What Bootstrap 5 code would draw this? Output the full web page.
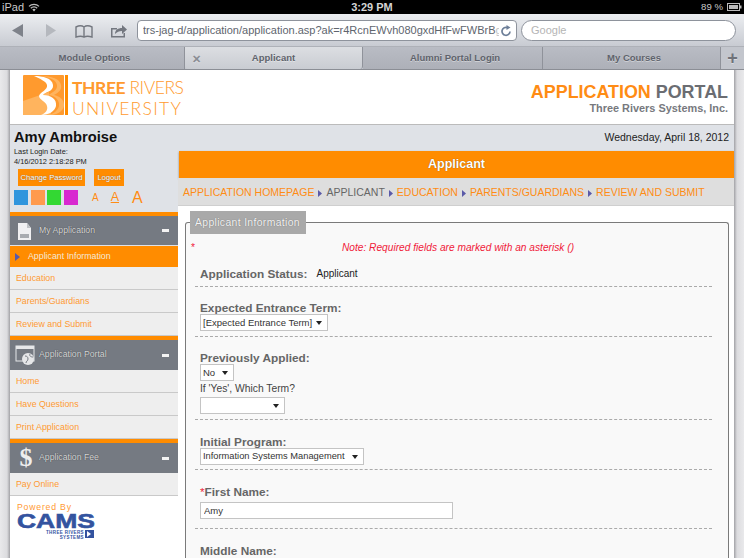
<!DOCTYPE html>
<html lang="en">
<head>
<meta charset="utf-8">
<title>Applicant</title>
<link href="https://cdn.jsdelivr.net/npm/bootstrap@5.3.0/dist/css/bootstrap.min.css" rel="stylesheet">
<style>
html,body{margin:0;height:558px;overflow:hidden;background:#e4e4e7;font-family:"Liberation Sans",Arial,sans-serif;}
.shell{width:744px;height:558px;overflow:hidden;}
.statusbar{height:14px;background:#000;color:#c9c9c9;font-size:11px;line-height:14px;padding:0 2px 0 2px;position:relative;}
.statusbar .clock{position:absolute;left:0;right:0;text-align:center;font-weight:700;color:#d4d4d4;}
.toolbar{height:32px;background:linear-gradient(#eceef1,#c8cbd2);border-top-left-radius:3px;border-top-right-radius:3px;padding:5px 0 0 12px;}
.urlbox{position:absolute;left:137px;top:20px;width:380px;height:21px;background:#fff;border:1px solid #8e939c;border-radius:4px;font-size:11px;line-height:19px;color:#60656e;padding-left:5px;white-space:nowrap;overflow:hidden;}
.urlclip{display:block;width:356px;overflow:hidden;}
.urlbox span.fade{color:#c0c2c6;opacity:1;}
.searchbox{position:absolute;left:521px;top:20px;width:215px;height:21px;background:#fff;border:1px solid #8e939c;border-radius:11px;font-size:11px;line-height:19px;color:#b5b5b5;padding-left:9px;}
.tabbar{height:24px;background:#c3c6cd;display:flex;border-top:1px solid #aeb1b8;border-bottom:1px solid #8b8e95;font-size:9.5px;font-weight:700;color:#5f636c;text-shadow:0 1px 0 rgba(255,255,255,.4);}
.tabitem{display:flex;align-items:center;justify-content:center;height:22px;background:linear-gradient(#b9bcc4,#adb0b8);border-right:1px solid #8f929a;}
.tabitem.pad{padding-left:5px;}
.tabitem.on{background:linear-gradient(#dcdee2,#c9ccd2);border-right:1px solid #8f929a;position:relative;border-bottom-left-radius:3px;border-bottom-right-radius:3px;}
.tab-x{position:absolute;left:7px;top:4px;font-size:11px;color:#8a8d94;font-weight:700;}
.tabplus{font-size:18px;color:#6f7279;line-height:1;}
.pagewrap{height:488px;display:flex;background:#ececee;overflow:hidden;}
.gutter{width:10px;flex:none;background:linear-gradient(90deg,#e9e9eb,#dcdcdf 70%,#a2a2a6);}
.pagebody{flex:1;background:#fff;min-width:0;}
.brandhead{height:55px;border-bottom:1px solid #bbb;background:#fff;display:flex;justify-content:space-between;padding:5px 6px 0 13px;}
.wordmark{color:#ff9a2e;font-family:Lato,"Liberation Sans",sans-serif;font-size:17.5px;line-height:21px;margin-left:4px;margin-top:2px;font-weight:300;white-space:nowrap;}
.wordmark b{font-weight:700;}
.wm-a{letter-spacing:-.45px;}
.wm-b{letter-spacing:1.3px;}
.porttitle{font-size:17.9px;font-weight:700;line-height:19px;text-align:right;color:#6b6d72;margin-top:8px;}
.porttitle em{font-style:normal;color:#ff8c14;}
.portsub{font-size:10.9px;font-weight:700;line-height:12px;color:#77797e;text-align:right;}
.twocol{display:flex;background:#dfe2e7;height:433px;}
.sidecol{width:168px;flex:none;display:flex;flex-direction:column;}
.maincol{flex:1;min-width:0;}
.userbox{height:87px;padding:3px 4px 0 4px;flex:none;}
.username{font-size:14.7px;font-weight:700;line-height:19px;color:#111;}
.logininfo{font-size:7.4px;line-height:9.5px;color:#222;}
.minibtn{background:#ff8c00;color:#fff;font-size:7.6px;border-radius:0;border:0;padding:0;height:17px;line-height:17px;text-shadow:0 0 1px #555;text-align:center;white-space:nowrap;}
.btnrow{margin:3px 0 0 4px;gap:9px;}
.swatchrow{margin-top:4px;align-items:center;}
.swatch{width:14px;height:15px;margin-right:2.5px;}
.fontsz{color:#ff8c14;margin:0;line-height:15px;}
.fs-a{font-size:10px;margin-left:12px;}
.fs-b{font-size:12.5px;margin-left:12px;text-decoration:underline;}
.fs-c{font-size:16px;margin-left:13px;}
.sidehead{height:34px;flex:none;border-top:4px solid #ff8c00;background:#757a82;color:#d6d7d9;font-size:8.7px;display:flex;align-items:center;padding:0 9px 0 5px;text-shadow:0 0 1px #333;}
.sidehead.first{height:33px;}
.sidehead .ttl{margin-left:2px;flex:1;}
.sidehead .ico{width:22px;height:24px;flex:none;}
.dollar{font-family:"Liberation Serif",serif;font-size:26px;font-weight:700;color:#eee;line-height:1;text-shadow:none;}
.minus{width:7px;height:3px;background:#f3f3f3;}
.sidelink{display:block;flex:none;height:23px;line-height:22px;background:#eee;border-bottom:1px solid #c9c9c9;color:#ff9a33;font-size:8.8px;padding-left:6px;text-decoration:none;}
.sidelink.cur{height:21px;line-height:21px;margin-top:1px;background:#ff8c00;color:#f5e8d6;border:0;display:flex;align-items:center;gap:8px;padding-left:1px;}
.powered{background:#fff;flex:1;padding:6px 7px;position:relative;}
.powered .pw{color:#ff9a33;font-size:8.7px;line-height:10px;letter-spacing:.8px;}
.camslogo{color:#33539f;font-weight:700;font-size:21px;line-height:18px;transform:scaleX(1.26);transform-origin:left;-webkit-text-stroke:.6px #33539f;}
.camssub{color:#33539f;font-size:4.5px;line-height:4.5px;font-weight:700;text-align:right;width:67px;letter-spacing:.4px;margin-top:1px;}
.camsmark{position:absolute;left:75px;top:34px;}
.dateline{height:26px;text-align:right;font-size:10.5px;line-height:24px;color:#222;padding-right:5px;}
.orangebar{height:27px;margin:0 0 0 1px;background:#ff8c00;color:#fff;font-weight:700;font-size:12.5px;line-height:26px;text-align:center;box-shadow:0 1px 2px #888;text-shadow:0 0 1px #7a4500;}
.crumbs{height:28px;background:#dedede;font-size:10.5px;line-height:28px;color:#666;padding-left:5px;white-space:nowrap;border-bottom:1px solid #cfcfcf;}
.crumbs a{color:#ff8c14;text-decoration:none;}
.crumbs svg{margin:0 4px;vertical-align:-0.5px;}
.contentarea{background:#fff;height:352px;padding:16px 5px 0 7px;position:relative;}
.legendtag{position:absolute;left:12px;top:5px;width:116px;height:23px;background:#a9a9a9;color:#f3f3f3;font-size:10.4px;letter-spacing:.35px;line-height:23px;padding-left:5px;text-shadow:0 0 1px #666;white-space:nowrap;}
.fieldbox{height:340px;background:#f9f9f9;border:1px solid #7a7a7a;border-bottom:0;border-radius:3px 3px 0 0;padding:0 16px 0 9px;}
.noteline{height:44px;padding:19px 0 0 9px;color:#f0203a;font-size:10.2px;font-style:italic;text-align:center;line-height:11px;position:relative;}
.noteline i{position:absolute;left:-4px;top:19px;font-style:normal;}
.lbl{font-size:11.8px;font-weight:700;color:#666;line-height:12px;padding-left:5px;white-space:nowrap;}
.lbl i{font-style:normal;color:#ee2a3a;font-weight:400;}
.frow{border-top:1px dashed #aaa;}
.statusrow{height:14px;margin-bottom:5px;}
.statusval{font-size:10px;color:#222;margin-left:9px;font-weight:400;}
.sel{appearance:none;display:block;height:17px;padding:0 0 0 2px;border:1px solid #c4c4c4;border-radius:0;background:#fff url("data:image/svg+xml,%3Csvg xmlns='http://www.w3.org/2000/svg' width='6' height='4'%3E%3Cpath d='M0 0h6L3 4z' fill='%23222'/%3E%3C/svg%3E") no-repeat right 5px center;font-size:9.5px;font-family:inherit;color:#333;margin-left:5px;line-height:15px;}
.sel.wide{font-size:9.3px;}
.txt{display:block;height:17px;width:253px;margin-left:5px;margin-top:4px;border:1px solid #c4c4c4;border-radius:0;background:#fff;font-size:9.5px;color:#333;padding:0 3px;font-family:inherit;}
.sublbl{font-size:10.3px;color:#444;line-height:12px;padding-left:5px;margin:2px 0 2px;}
.r1{height:50px;padding-top:15px;}
.r2{height:83px;padding-top:15px;}
.r3{height:50px;padding-top:16px;}
.r4{height:59px;padding-top:16px;}
.r5{padding-top:16px;}
</style>
</head>
<body>
<div class="shell position-relative">
  <div class="statusbar d-flex justify-content-between">
    <span class="clock">3:29 PM</span>
    <span class="d-flex align-items-center gap-1 position-relative"><span>iPad</span>
      <svg width="12" height="9" viewBox="0 0 12 9"><path d="M1 3.400a7 7 0 0 1 10 0M2.800 5.200a4.500 4.500 0 0 1 6.400 0" fill="none" stroke="#bbb" stroke-width="1.3"/><path d="M4.300 6.600a2.400 2.400 0 0 1 3.400 0L6 8.400z" fill="#bbb"/></svg></span>
    <span class="d-flex align-items-center gap-1 position-relative"><small>89 %</small>
      <svg width="15" height="8" viewBox="0 0 15 8"><rect x=".5" y=".5" width="12" height="7" fill="none" stroke="#bbb"/><rect x="2" y="2" width="9" height="4" fill="#bbb"/><rect x="13" y="2.500" width="1.500" height="3" fill="#bbb"/></svg></span>
  </div>
  <div class="toolbar d-flex align-items-start">
    <svg class="mt-1" width="120" height="18" viewBox="0 0 120 18">
      <path d="M0 7.500 11 1v13z" fill="#7e828a"/>
      <path d="M34 1v13l10-6.500z" fill="#b5b8be"/>
      <path d="M64 4c3-1.500 6-1.500 8 0 2-1.500 5-1.500 8 0v10c-3-1-6-1-8 0-2-1-5-1-8 0zM72 4v10" fill="none" stroke="#73777f" stroke-width="1.4"/>
      <path d="M99 5h6v1.500h-4.500V13h11v-3h1.500v4.500H99z" fill="#73777f"/>
      <path d="M103 11c0-4 3-6 7-6V2l5 4.500-5 4.500V8c-3 0-5 1-7 3z" fill="#73777f"/>
    </svg>
  </div>
  <div class="urlbox"><span class="urlclip">trs-jag-d/application/application.asp?ak=r4RcnEWvh080gxdHfFwFWBrB<span class="fade">g</span></span></div>
  <svg class="position-absolute" style="left:500px;top:25px" width="12" height="12" viewBox="0 0 12 12"><path d="M10 6.500A4 4 0 1 1 7.500 2.600" fill="none" stroke="#6d7f99" stroke-width="1.700"/><path d="M6.500 0l4 2.500-4 2.500z" fill="#6d7f99"/></svg>
  <div class="searchbox">Google</div>
  <div class="tabbar">
    <div class="tabitem pad" style="width:185px">Module Options</div>
    <div class="tabitem on" style="width:178px"><span class="tab-x">✕</span>Applicant</div>
    <div class="tabitem pad" style="width:180px">Alumni Portal Login</div>
    <div class="tabitem pad" style="width:178px">My Courses</div>
    <div class="flex-fill d-flex align-items-center justify-content-center tabplus">+</div>
  </div>
  <div class="pagewrap">
    <div class="gutter"></div>
    <div class="pagebody">
      <div class="brandhead">
        <div class="d-flex align-items-start">
          <svg width="45" height="41" viewBox="0 0 45 41">
            <rect width="41" height="40" rx="1" fill="#ff9a2e"/>
            <path d="M0 26 26 17 28 40H0z" fill="#ffb45e"/>
            <path d="M11 1c9 0 18 2 19 9 1 7-9 7-10 10 8 0 14 4 13 11-1 5-7 9-15 9 5-2 7-5 6-9-1-5-8-6-8-10 1-4 9-6 8-11-1-4-7-6-13-9z" fill="#fff"/>
            <path d="M17 1c8 1 16 3 17 9 1 6-7 8-8 10 6 1 11 5 10 11-1 4-5 8-11 9h4c7-1 12-5 12-10 0-6-5-9-10-10 5-3 8-5 7-10-1-6-9-9-21-9z" fill="#ffb45e"/>
            <rect x="42" width="3" height="40" fill="#ff8c00"/>
          </svg>
          <div class="wordmark"><div class="wm-a"><b>THREE</b> RIVERS</div><div class="wm-b">UNIVERSITY</div></div>
        </div>
        <div>
          <div class="porttitle"><em>APPLICATION</em> PORTAL</div>
          <div class="portsub">Three Rivers Systems, Inc.</div>
        </div>
      </div>
      <div class="twocol">
        <div class="sidecol">
          <div class="userbox">
            <div class="username">Amy Ambroise</div>
            <div class="logininfo">Last Login Date:<br>4/16/2012 2:18:28 PM</div>
            <div class="d-flex btnrow">
              <button type="button" class="btn minibtn" style="width:67px">Change Password</button>
              <button type="button" class="btn minibtn" style="width:30px">Logout</button>
            </div>
            <div class="d-flex swatchrow">
              <div class="swatch" style="background:#2f95dd"></div>
              <div class="swatch" style="background:#ff9a4d"></div>
              <div class="swatch" style="background:#33d833"></div>
              <div class="swatch" style="background:#d829d0"></div>
              <span class="fontsz fs-a">A</span>
              <span class="fontsz fs-b">A</span>
              <span class="fontsz fs-c">A</span>
            </div>
          </div>
          <div class="sidehead first">
            <svg class="ico" viewBox="0 0 22 24"><path d="M3 4h9l4 5v12H3z" fill="#f0f0f2"/><path d="M12 4l4 5h-4z" fill="#bfc2c6"/><rect x="5" y="15" width="9" height="4" fill="#a9acb1"/></svg>
            <span class="ttl">My Application</span><span class="minus"></span>
          </div>
          <a class="sidelink cur" href="#"><svg width="5" height="8" viewBox="0 0 5 8" class="ms-1"><path d="M0 0l5 4-5 4z" fill="#5a5aa8"/></svg><span>Applicant Information</span></a>
          <a class="sidelink" href="#">Education</a>
          <a class="sidelink" href="#">Parents/Guardians</a>
          <a class="sidelink" href="#">Review and Submit</a>
          <div class="sidehead">
            <svg class="ico" viewBox="0 0 22 24"><rect x="1" y="3" width="18" height="15" fill="none" stroke="#e6e7e9" stroke-width="1"/><rect x="1" y="3" width="18" height="3" fill="#e6e7e9"/><circle cx="13" cy="16" r="6" fill="#e6e7e9"/><path d="M10 13c2 0 3 1 3 3s-2 2-2 4M15 11c-1 2 1 3 3 3" stroke="#757a82" fill="none"/></svg>
            <span class="ttl">Application Portal</span><span class="minus"></span>
          </div>
          <a class="sidelink" href="#">Home</a>
          <a class="sidelink" href="#">Have Questions</a>
          <a class="sidelink" href="#">Print Application</a>
          <div class="sidehead">
            <span class="ico d-flex align-items-center justify-content-center dollar">$</span>
            <span class="ttl">Application Fee</span><span class="minus"></span>
          </div>
          <a class="sidelink" href="#">Pay Online</a>
          <div class="powered">
            <div class="pw">Powered By</div>
            <div class="camslogo">CAMS</div>
            <div class="camssub">THREE RIVERS<br>SYSTEMS</div>
            <svg class="camsmark" width="9" height="8" viewBox="0 0 9 8"><rect width="9" height="8" fill="#33539f"/><path d="M2 1l4 3-4 3z" fill="#fff"/></svg>
          </div>
        </div>
        <div class="maincol">
          <div class="dateline">Wednesday, April 18, 2012</div>
          <div class="orangebar">Applicant</div>
          <div class="crumbs"><a href="#">APPLICATION HOMEPAGE</a><svg width="4" height="7" viewBox="0 0 4 7"><path d="M0 0l4 3.500-4 3.500z" fill="#5a5aa8"/></svg>APPLICANT<svg width="4" height="7" viewBox="0 0 4 7"><path d="M0 0l4 3.500-4 3.500z" fill="#5a5aa8"/></svg><a href="#">EDUCATION</a><svg width="4" height="7" viewBox="0 0 4 7"><path d="M0 0l4 3.500-4 3.500z" fill="#5a5aa8"/></svg><a href="#">PARENTS/GUARDIANS</a><svg width="4" height="7" viewBox="0 0 4 7"><path d="M0 0l4 3.500-4 3.500z" fill="#5a5aa8"/></svg><a href="#">REVIEW AND SUBMIT</a></div>
          <div class="contentarea">
            <div class="legendtag">Applicant Information</div>
            <div class="fieldbox">
              <div class="noteline"><i>*</i>Note: Required fields are marked with an asterisk ()</div>
              <div class="lbl statusrow d-flex align-items-center">Application Status:<span class="statusval">Applicant</span></div>
              <div class="frow r1"><div class="lbl">Expected Entrance Term:</div><select class="sel" style="width:128px"><option>[Expected Entrance Term]</option></select></div>
              <div class="frow r2"><div class="lbl">Previously Applied:</div><select class="sel" style="width:34px"><option>No</option></select><div class="sublbl">If 'Yes', Which Term?</div><select class="sel" style="width:85px"><option></option></select></div>
              <div class="frow r3"><div class="lbl">Initial Program:</div><select class="sel wide" style="width:164px"><option>Information Systems Management</option></select></div>
              <div class="frow r4"><div class="lbl"><i>*</i>First Name:</div><input class="txt" type="text" value="Amy"></div>
              <div class="frow r5"><div class="lbl">Middle Name:</div></div>
            </div>
          </div>
        </div>
      </div>
    </div>
    <div class="gutter" style="transform:scaleX(-1)"></div>
  </div>
</div>
<script src="https://cdn.jsdelivr.net/npm/bootstrap@5.3.0/dist/js/bootstrap.bundle.min.js"></script>
</body>
</html>
